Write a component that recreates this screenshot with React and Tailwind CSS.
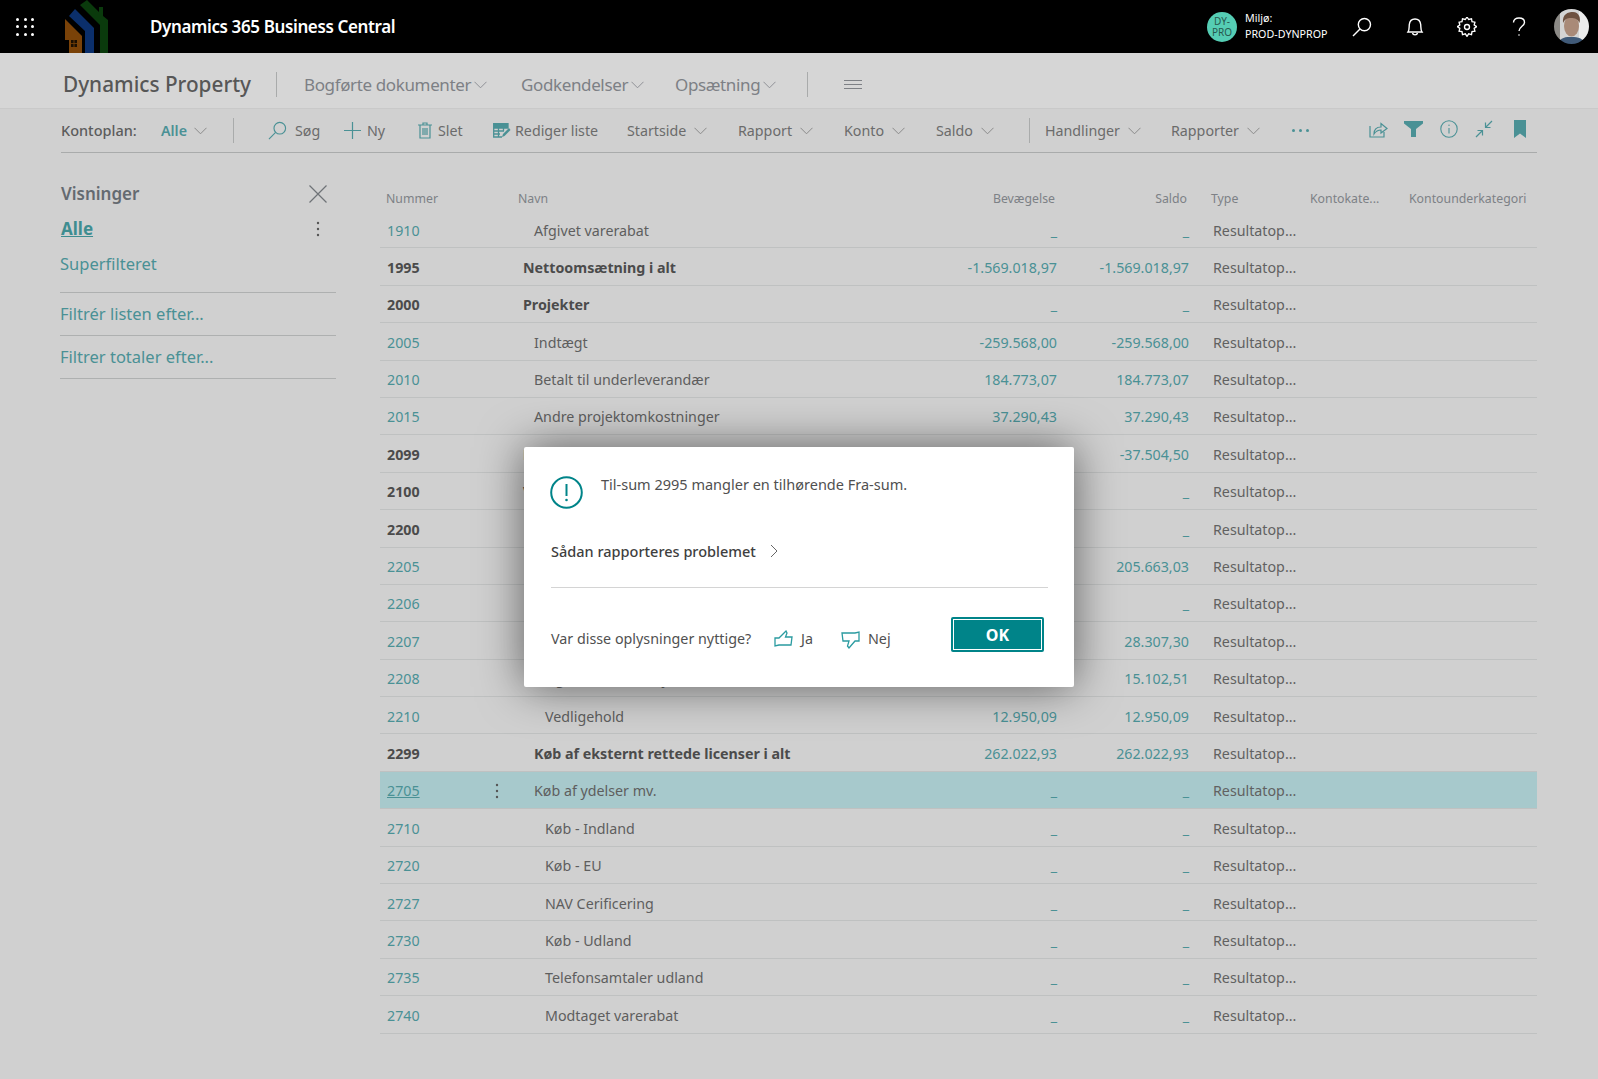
import React from "react";

const T = "#4a9195";
const Chevron = ({ c = "#8a8a8a", w = 13, className = "" }) => (
  <svg width={w} height="8" viewBox="0 0 13 8" fill="none" className={className}>
    <path d="M0.5 0.8 L6.5 6.8 L12.5 0.8" stroke={c} strokeWidth="1" />
  </svg>
);

const Search = ({ c, s = 20, sw = 1.4 }) => (
  <svg width={s} height={s} viewBox="0 0 20 20" fill="none">
    <circle cx="12.4" cy="7.6" r="6.1" stroke={c} strokeWidth={sw} />
    <path d="M8 12 L1 19" stroke={c} strokeWidth={sw} />
  </svg>
);

const rows = [
  ["1910", "Afgivet varerabat", 1, "_", "_", "l"],
  ["1995", "Nettoomsætning i alt", 0, "-1.569.018,97", "-1.569.018,97", "b"],
  ["2000", "Projekter", 0, "_", "_", "b"],
  ["2005", "Indtægt", 1, "-259.568,00", "-259.568,00", "l"],
  ["2010", "Betalt til underleverandær", 1, "184.773,07", "184.773,07", "l"],
  ["2015", "Andre projektomkostninger", 1, "37.290,43", "37.290,43", "l"],
  ["2099", "Projekter i alt", 0, "-37.504,50", "-37.504,50", "b"],
  ["2100", "Vareforbrug", 0, "_", "_", "b"],
  ["2200", "Køb af eksternt rettede licenser", 1, "_", "_", "b"],
  ["2205", "Licenser", 2, "205.663,03", "205.663,03", "l"],
  ["2206", "Licenser EU", 2, "_", "_", "l"],
  ["2207", "Licenser udland", 2, "28.307,30", "28.307,30", "l"],
  ["2208", "Ugebaseret driftsydelse", 2, "15.102,51", "15.102,51", "l"],
  ["2210", "Vedligehold", 2, "12.950,09", "12.950,09", "l"],
  ["2299", "Køb af eksternt rettede licenser i alt", 1, "262.022,93", "262.022,93", "b"],
  ["2705", "Køb af ydelser mv.", 1, "_", "_", "s"],
  ["2710", "Køb - Indland", 2, "_", "_", "l"],
  ["2720", "Køb - EU", 2, "_", "_", "l"],
  ["2727", "NAV Cerificering", 2, "_", "_", "l"],
  ["2730", "Køb - Udland", 2, "_", "_", "l"],
  ["2735", "Telefonsamtaler udland", 2, "_", "_", "l"],
  ["2740", "Modtaget varerabat", 2, "_", "_", "l"],
];

const indent = ["pl-[11px]", "pl-[22px]", "pl-[33px]"];

function Row({ r }) {
  const [num, name, lvl, bev, sal, kind] = r;
  const bold = kind === "b";
  const sel = kind === "s";
  return (
    <div className={`flex h-[37.4px] items-center border-b border-[#bfc1c1] pt-[2px] text-[14.25px] ${sel ? "bg-[#a7c9cc]" : ""}`}>
      <div className="w-[132px] flex items-center pl-[7px] shrink-0">
        <span className={`w-[108px] ${bold ? "font-bold text-[#4b4b4b]" : "text-[#4a9195]"} ${sel ? "underline" : ""}`}>{num}</span>
        {sel && (
          <svg width="4" height="16" viewBox="0 0 4 16" fill="#555"><circle cx="2" cy="2" r="1.2" /><circle cx="2" cy="8" r="1.2" /><circle cx="2" cy="14" r="1.2" /></svg>
        )}
      </div>
      <div className={`w-[418px] shrink-0 ${indent[lvl]} ${bold ? "font-bold text-[#4b4b4b]" : "text-[#5e5e5e]"}`}>{name}</div>
      <div className="w-[127px] shrink-0 text-right text-[#4a9195]">{bev}</div>
      <div className="w-[132px] shrink-0 text-right text-[#4a9195]">{sal}</div>
      <div className="pl-[24px] text-[#616161]">Resultatop...</div>
    </div>
  );
}

const Item = ({ w, label, chev = true, icon, gap = "gap-[6px]" }) => (
  <div className={`flex items-center ${gap} shrink-0 text-[#6b6b6b]`} style={{ width: w }}>
    {icon}
    <span>{label}</span>
    {chev && <Chevron className="ml-[2px]" />}
  </div>
);

export default function App() {
  return (
    <div className="relative h-[1079px] w-[1598px] overflow-hidden bg-[#d0d0d0] font-['Noto_Sans','Open_Sans',sans-serif]">
      {/* top bar */}
      <header className="flex h-[53px] items-center bg-black text-white">
        <div className="ml-[16px] grid w-[18px] grid-cols-3 gap-[4.5px]">
          {Array.from({ length: 9 }).map((_, i) => (
            <span key={i} className="h-[3px] w-[3px] rounded-full bg-white" />
          ))}
        </div>
        <svg width="44" height="53" viewBox="65 0 44 53" className="ml-[31px] shrink-0">
          <path d="M80 5 L87 0 L99 12 V7 L103 7 V16 L108 20 V53 H100 V25 Z" fill="#0a3a0c" />
          <path d="M69 16 L75 9 L94 28 V53 H85 V31 Z" fill="#0b2f6b" />
          <path d="M65 19 L82 36 V53 H69 V40 H65 Z" fill="#7a4208" />
          <path d="M71 40 H77 V47 H71 Z" fill="#1a0f02" />
          <path d="M74 40 V47 M71 43.5 H77" stroke="#7a4208" strokeWidth="0.8" />
        </svg>
        <div className="ml-[41px] text-[17px] font-semibold tracking-[-0.38px]">Dynamics 365 Business Central</div>
        <div className="ml-auto flex h-[30px] w-[30px] flex-col items-center justify-center rounded-full bg-[#55cdb4] text-[10px] leading-[10.5px] text-[#27584e]">
          <span>DY-</span>
          <span>PRO</span>
        </div>
        <div className="ml-[8px] flex w-[101px] -mt-[2px] flex-col text-[10.7px] leading-[16px]">
          <span>Miljø:</span>
          <span>PROD-DYNPROP</span>
        </div>
        <div className="ml-[6px] w-[20px]"><Search c="#fff" s={20} /></div>
        <svg width="18" height="20" viewBox="0 0 18 20" fill="none" className="ml-[34px]">
          <path d="M2 15 C3.5 13 3 10 3.3 7.5 C3.7 4 6 2 9 2 C12 2 14.3 4 14.7 7.5 C15 10 14.5 13 16 15 Z" stroke="#fff" strokeWidth="1.4" />
          <path d="M6.5 16 C7 18.5 11 18.5 11.5 16" stroke="#fff" strokeWidth="1.4" />
        </svg>
        <svg width="20" height="20" viewBox="0 0 24 24" fill="none" stroke="#fff" strokeWidth="1.6" className="ml-[33px]">
          <circle cx="12" cy="12" r="3" />
          <path d="M12 1.5 l2 3 3.4-.9 .6 3.5 3.5 .6 -.9 3.4 3 2 -3 2 .9 3.4 -3.5 .6 -.6 3.5 -3.4-.9 -2 3 -2-3 -3.4 .9 -.6-3.5 -3.5-.6 .9-3.4 -3-2 3-2 -.9-3.4 3.5-.6 .6-3.5 3.4 .9 Z" transform="translate(0 -1.5)" />
        </svg>
        <svg width="14" height="20" viewBox="0 0 14 20" fill="none" stroke="#fff" strokeWidth="1.4" className="ml-[35px]">
          <path d="M1.5 5.5 C1.5 2.5 4 1 7 1 C10 1 12.5 2.6 12.5 5.4 C12.5 9 7 9.5 7 14" />
          <circle cx="7" cy="18" r="0.8" fill="#fff" stroke="none" />
        </svg>
        <svg width="35" height="35" viewBox="0 0 35 35" className="ml-[28px] mr-[9px] rounded-full">
          <defs><filter id="soft"><feGaussianBlur stdDeviation="0.7" /></filter></defs>
          <g filter="url(#soft)">
            <rect width="35" height="35" fill="#d4d4d4" />
            <rect x="25" width="10" height="35" fill="#ececec" />
            <rect width="6" height="35" fill="#8c8a86" />
            <path d="M4 35 C6 28 12 28 18 28 C24 28 29 29 31 35 Z" fill="#3f5a78" />
            <ellipse cx="17.5" cy="17" rx="7.5" ry="10.5" fill="#a98a78" />
            <path d="M9 14 C8 5 14 3 19 3 C25 3 27 9 25.5 14 C24 10 21 9 17 9 C13 9 11 10 9 14 Z" fill="#6e5140" />
          </g>
        </svg>
      </header>

      {/* nav band */}
      <div className="flex h-[56px] items-center border-b border-[#c9c9c9] bg-[#d6d6d6] pl-[63px] pt-[8px]">
        <div className="w-[213px] text-[20.75px] font-medium text-[#575757]">Dynamics Property</div>
        <div className="h-[25px] w-px bg-[#a9abab]" />
        <div className="ml-[27px] flex items-center text-[17px] tracking-[-0.37px] text-[#7d8085]">
          <div className="flex w-[217px] items-center gap-[3px]">Bogførte dokumenter<Chevron c="#8f9196" /></div>
          <div className="flex w-[154px] items-center gap-[3px]">Godkendelser<Chevron c="#8f9196" /></div>
          <div className="flex w-[132px] items-center gap-[3px]">Opsætning<Chevron c="#8f9196" /></div>
        </div>
        <div className="h-[25px] w-px bg-[#a9abab]" />
        <div className="ml-[36px] flex w-[18px] flex-col gap-[3px]">
          <span className="h-px bg-[#7d8085]" />
          <span className="h-px bg-[#7d8085]" />
          <span className="h-px bg-[#7d8085]" />
        </div>
      </div>

      {/* action bar */}
      <div className="mx-[61px] flex h-[44px] items-center border-b border-[#a9abab] text-[14.25px]">
        <div className="w-[100px] text-[14.5px] font-medium text-[#5c5c5c]">Kontoplan:</div>
        <div className="flex w-[72px] items-center gap-[7px] font-semibold text-[#4a9195]">Alle<Chevron /></div>
        <div className="mr-[34px] h-[25px] w-px bg-[#a9abab]" />
        <Item w={76} label="Søg" chev={false} gap="gap-[8px]" icon={<Search c={T} s={19} sw={1.2} />} />
        <Item w={74} label="Ny" chev={false} icon={
          <svg width="17" height="17" viewBox="0 0 17 17" stroke={T} strokeWidth="1.2"><path d="M8.5 0 V17 M0 8.5 H17" /></svg>
        } />
        <Item w={75} label="Slet" chev={false} icon={
          <svg width="14" height="17" viewBox="0 0 14 17" fill="none" stroke={T} strokeWidth="1.2"><path d="M0 3 H14 M5 3 V1 H9 V3 M2 3 V16 H12 V3 M5 6 V13 M7 6 V13 M9 6 V13" /></svg>
        } />
        <Item w={134} label="Rediger liste" chev={false} gap="gap-[4px]" icon={
          <svg width="18" height="15" viewBox="0 0 18 15" fill="none" stroke={T} strokeWidth="1.3">
            <path d="M0.7 0.7 H15 V5 H0.7 Z" fill={T} />
            <path d="M0.7 5 V14 H9 M5.5 5 V14 M10.5 5 V8 M0.7 8 H11 M0.7 11 H7" />
            <path d="M9 14 L10 11 L16 5 L17.5 7 L11.5 13 Z" fill={T} stroke="none" />
          </svg>
        } />
        <Item w={111} label="Startside" />
        <Item w={106} label="Rapport" />
        <Item w={92} label="Konto" />
        <Item w={93} label="Saldo" />
        <div className="mr-[15px] h-[25px] w-px bg-[#a9abab]" />
        <Item w={126} label="Handlinger" />
        <Item w={121} label="Rapporter" />
        <div className="flex w-[77px] shrink-0 gap-[4px]">
          {[0, 1, 2].map((i) => (<span key={i} className="h-[3px] w-[3px] rounded-full bg-[#4a9195]" />))}
        </div>
        <div className="flex items-center -mt-[3px]">
          <svg width="19" height="17" viewBox="0 0 19 17" fill="none" stroke={T} strokeWidth="1.2">
            <path d="M1 5 V16 H15 V11" /><path d="M5 13 C5 8 8 6 12 6 V2.5 L18 7.5 L12 12 V9 C9 9 7 10 5 13 Z" />
          </svg>
          <svg width="19" height="16" viewBox="0 0 19 16" fill={T} className="ml-[16px]">
            <path d="M0 0 H19 V2.5 L12 8 V16 H7 V8 L0 2.5 Z" />
          </svg>
          <svg width="18" height="18" viewBox="0 0 18 18" fill="none" stroke={T} strokeWidth="1.1" className="ml-[17px]">
            <circle cx="9" cy="9" r="8.2" /><path d="M9 8 V13.5" /><circle cx="9" cy="5.3" r="0.7" fill={T} stroke="none" />
          </svg>
          <svg width="18" height="18" viewBox="0 0 18 18" fill="none" stroke={T} strokeWidth="1.2" className="ml-[17px]">
            <path d="M17 1 L10.5 7.5 M10.5 2.5 V7.5 H15.5 M1 17 L7.5 10.5 M2.5 10.5 H7.5 V15.5" />
          </svg>
          <svg width="12" height="18" viewBox="0 0 12 18" fill={T} className="ml-[21px]">
            <path d="M0 0 H12 V18 L6 13.5 L0 18 Z" />
          </svg>
        </div>
      </div>

      {/* body */}
      <div className="flex">
        <aside className="ml-[60px] w-[276px] shrink-0 pt-[29px]">
          <div className="flex h-[24px] items-center justify-between pl-[1px] pr-[9px] text-[17px] font-semibold text-[#646a70]">
            <span>Visninger</span>
            <svg width="18" height="18" viewBox="0 0 18 18" stroke="#6f7377" strokeWidth="1.2"><path d="M0.5 0.5 L17.5 17.5 M17.5 0.5 L0.5 17.5" /></svg>
          </div>
          <div className="mt-[11px] flex h-[24px] items-center justify-between pl-[1px] pr-[16px] text-[17px] font-bold text-[#3e8d90]">
            <span className="underline">Alle</span>
            <svg width="4" height="16" viewBox="0 0 4 16" fill="#555"><circle cx="2" cy="2" r="1.2" /><circle cx="2" cy="8" r="1.2" /><circle cx="2" cy="14" r="1.2" /></svg>
          </div>
          <div className="mt-[11px] h-[41px] border-b border-[#aeb0b0] text-[16.5px] leading-[24px] text-[#4a9195]">Superfilteret</div>
          <div className="h-[43px] border-b border-[#aeb0b0] pt-[9px] text-[16.5px] leading-[24px] text-[#4a9195]">Filtrér listen efter...</div>
          <div className="h-[43px] border-b border-[#aeb0b0] pt-[9px] text-[16.5px] leading-[24px] text-[#4a9195]">Filtrer totaler efter...</div>
        </aside>
        <main className="ml-[44px] w-[1157px] shrink-0 pt-[35px]">
          <div className="flex h-[23px] items-center text-[12.3px] text-[#7d8186]">
            <div className="w-[132px] pl-[6px]">Nummer</div>
            <div className="w-[418px] pl-[6px]">Navn</div>
            <div className="w-[125px] text-right">Bevægelse</div>
            <div className="w-[132px] text-right">Saldo</div>
            <div className="w-[123px] pl-[24px]">Type</div>
            <div className="w-[99px]">Kontokate...</div>
            <div>Kontounderkategori</div>
          </div>
          {rows.map((r) => (<Row key={r[0]} r={r} />))}
        </main>
      </div>

      {/* dialog */}
      <div className="absolute left-[524px] top-[447px] flex h-[240px] w-[550px] flex-col rounded-[2px] bg-white px-[27px] pt-[29px] text-[#505050] shadow-[0_0_45px_rgba(0,0,0,0.55)]">
        <div className="flex items-start">
          <svg width="33" height="33" viewBox="0 0 33 33" fill="none" className="shrink-0 -ml-[1px]">
            <circle cx="16.5" cy="16.5" r="15.3" stroke="#008489" strokeWidth="2" />
            <path d="M16.5 8 V20" stroke="#008489" strokeWidth="2" />
            <circle cx="16.5" cy="24" r="1.3" fill="#008489" />
          </svg>
          <div className="ml-[18px] text-[14.5px] leading-[20px] -mt-[2px]">Til-sum 2995 mangler en tilhørende Fra-sum.</div>
        </div>
        <div className="mt-[32px] flex items-center text-[14.5px] font-medium leading-[20px] text-[#3f3f3f]">
          Sådan rapporteres problemet
          <svg width="8" height="14" viewBox="0 0 8 14" fill="none" stroke="#666" className="ml-[14px]"><path d="M1 1 L7 7 L1 13" /></svg>
        </div>
        <div className="mt-[26px] border-t border-[#d4d4d4] mr-[-1px]" />
        <div className="mt-[29px] flex items-start text-[14.3px] leading-[20px]">
          <span className="mt-[12px] w-[223px] shrink-0">Var disse oplysninger nyttige?</span>
          <svg width="19" height="18" viewBox="0 0 19 18" fill="none" stroke="#2a9ba0" strokeWidth="1.3" className="mt-[13px] shrink-0">
            <path d="M1 8 H5 L12 1 L13 3 L11.5 7 H18 L17 15 H5 L1 16 Z" />
          </svg>
          <span className="ml-[8px] mt-[12px] w-[40px]">Ja</span>
          <svg width="19" height="18" viewBox="0 0 19 18" fill="none" stroke="#2a9ba0" strokeWidth="1.3" className="mt-[14px] shrink-0">
            <path d="M18 10 H14 L8 17 L6.5 15 L8 10 H2 L1 2 H14 L18 1 Z" />
          </svg>
          <span className="ml-[8px] mt-[12px] w-[83px]">Nej</span>
          <button className="flex h-[35px] w-[93px] items-center justify-center rounded-[2px] bg-[#008489] text-[16px] font-bold text-white outline outline-1 -outline-offset-3 outline-white">OK</button>
        </div>
      </div>
    </div>
  );
}
